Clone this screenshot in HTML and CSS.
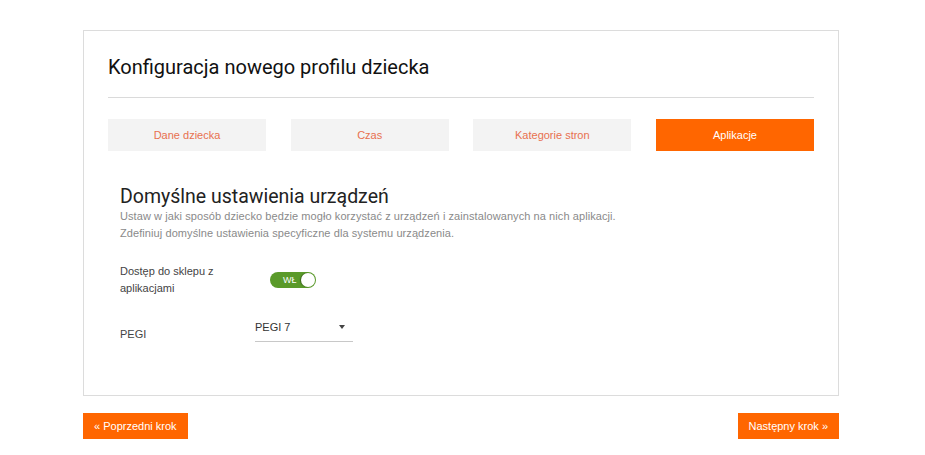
FILE: index.html
```html
<!DOCTYPE html>
<html lang="pl">
<head>
<meta charset="utf-8">
<title>Konfiguracja nowego profilu dziecka</title>
<link rel="stylesheet" href="styles.css">
</head>
<body>
<div class="page">
  <div class="card">
    <h1 class="title">Konfiguracja nowego profilu dziecka</h1>
    <div class="divider"></div>
    <nav class="tabs">
      <div class="tab">Dane dziecka</div>
      <div class="tab">Czas</div>
      <div class="tab">Kategorie stron</div>
      <div class="tab active">Aplikacje</div>
    </nav>
    <section class="section">
      <h2 class="heading">Domyślne ustawienia urządzeń</h2>
      <p class="desc">Ustaw w jaki sposób dziecko będzie mogło korzystać z urządzeń i zainstalowanych na nich aplikacji.<br>Zdefiniuj domyślne ustawienia specyficzne dla systemu urządzenia.</p>
      <div class="row row-toggle">
        <div class="label">Dostęp do sklepu z<br>aplikacjami</div>
        <div class="toggle"><span class="toggle-text">WŁ</span><span class="knob"></span></div>
      </div>
      <div class="row row-select">
        <div class="label label-pegi">PEGI</div>
        <div class="select"><span>PEGI 7</span><span class="caret"></span></div>
      </div>
    </section>
  </div>
  <div class="actions">
    <button class="btn">« Poprzedni krok</button>
    <button class="btn">Następny krok »</button>
  </div>
</div>
</body>
</html>
```

FILE: styles.css
```css
* { box-sizing: border-box; }
html, body { margin: 0; padding: 0; background: #fff; }
body { font-family: Roboto, "Liberation Sans", Arial, sans-serif; color: #333; }

.page { width: 756px; margin: 30px 0 0 83px; }

.card {
  border: 1px solid #dcdcdc;
  padding: 24px 24px 0 24px;
  height: 366px;
}

.title {
  margin: 0;
  font-size: 20px;
  line-height: 24px;
  font-weight: 400;
  color: #111;
}

.divider { height: 1px; background: #dadada; margin-top: 18px; }

.tabs {
  display: grid;
  grid-template-columns: repeat(4, 158px);
  justify-content: space-between;
  margin-top: 21px;
}
.tab {
  height: 32px;
  background: #f3f3f3;
  color: #e8704f;
  font-family: "Liberation Sans", Arial, sans-serif;
  font-size: 11px;
  display: flex;
  align-items: center;
  justify-content: center;
}
.tab.active { background: #ff6600; color: #fff; }

.section { padding-left: 12px; }

.heading {
  margin: 36px 0 0 0;
  font-size: 19.5px;
  line-height: 20px;
  font-weight: 400;
  color: #222;
}

.desc {
  margin: 1px 0 0 0;
  font-family: "Liberation Sans", Arial, sans-serif;
  font-size: 11px;
  line-height: 17px;
  letter-spacing: 0.08px;
  color: #8a8a8a;
}

.row { display: flex; align-items: center; }
.label {
  width: 135px;
  font-family: "Liberation Sans", Arial, sans-serif;
  font-size: 11px;
  line-height: 17px;
  color: #444;
}
.row-toggle { margin-top: 21px; }

.toggle {
  margin-left: 15px;
  width: 46px;
  height: 16px;
  border-radius: 8px;
  background: #5a9a2a;
  position: relative;
  display: flex;
  align-items: center;
}
.toggle-text {
  font-family: "Liberation Sans", Arial, sans-serif;
  font-size: 9px;
  color: #fff;
  margin-left: 13px;
}
.knob {
  position: absolute;
  right: 1px;
  top: 1px;
  width: 14px;
  height: 14px;
  border-radius: 50%;
  background: #fff;
  box-shadow: -1px 0 1px rgba(0, 0, 0, 0.35);
}

.row-select { margin-top: 19px; align-items: flex-start; }
.label-pegi { padding-top: 10px; }
.select {
  width: 98px;
  height: 26px;
  border-bottom: 1px solid #c8c8c8;
  display: flex;
  align-items: center;
  justify-content: space-between;
  font-family: "Liberation Sans", Arial, sans-serif;
  font-size: 11px;
  color: #333;
  padding: 0 8px 4px 0;
}
.caret {
  width: 0; height: 0;
  border-left: 3px solid transparent;
  border-right: 3px solid transparent;
  border-top: 4px solid #444;
}

.actions { display: flex; justify-content: space-between; margin-top: 17px; }
.btn {
  border: 0;
  background: #ff6600;
  color: #fff;
  font-family: "Liberation Sans", Arial, sans-serif;
  font-size: 11px;
  height: 26px;
  padding: 0 11px;
  cursor: pointer;
}
```
